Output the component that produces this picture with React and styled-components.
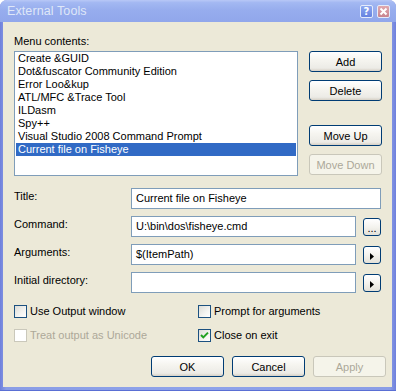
import React from 'react'
import styled, { createGlobalStyle } from 'styled-components'

const tools = [
    'Create &GUID',
    'Dot&fuscator Community Edition',
    'Error Loo&kup',
    'ATL/MFC &Trace Tool',
    'ILDasm',
    'Spy++',
    'Visual Studio 2008 Command Prompt',
    'Current file on Fisheye',
]

const GlobalStyle = createGlobalStyle`
html, body {
    margin:0;
    padding:0;
    background:#ffffff;
}
* {
    box-sizing:border-box;
}
`

const CheckBox = ({ label, checked, disabled }) => (
    <CheckRow disabled={disabled}>
        <Box disabled={disabled}>
            {checked && (
                <svg width="11" height="11" viewBox="0 0 11 11">
                    <path d="M2 5 L4.3 7.4 L9 2.6" fill="none" stroke="#21a121" strokeWidth="2" />
                </svg>
            )}
        </Box>
        <span>{label}</span>
    </CheckRow>
)

const Arrow = () => (
    <svg width="4" height="7" viewBox="0 0 4 7"><path d="M0 0 L4 3.5 L0 7 Z" fill="#000" /></svg>
)

const App = () => {
    return (
        <>
            <GlobalStyle />
            <Window>
                <TitleBar>
                    <TitleText>External Tools</TitleText>
                    <CaptionButtons>
                        <CaptionButton>?</CaptionButton>
                        <CaptionButton close>
                            <svg width="9" height="9" viewBox="0 0 9 9">
                                <path d="M1.5 1.5 L7.5 7.5 M7.5 1.5 L1.5 7.5" stroke="#ffffff" strokeWidth="2" />
                            </svg>
                        </CaptionButton>
                    </CaptionButtons>
                </TitleBar>
                <Client>
                    <Label>Menu contents:</Label>
                    <TopRow>
                        <ListBox>
                            {tools.map((t, i) => (
                                <ListItem key={t} selected={i === tools.length - 1}>{t}</ListItem>
                            ))}
                        </ListBox>
                        <SideButtons>
                            <Button>Add</Button>
                            <Button>Delete</Button>
                            <Spacer />
                            <Button>Move Up</Button>
                            <Button disabled>Move Down</Button>
                        </SideButtons>
                    </TopRow>
                    <Form>
                        <FieldLabel>Title:</FieldLabel>
                        <Input wide>Current file on Fisheye</Input>
                        <FieldLabel>Command:</FieldLabel>
                        <Input>U:\bin\dos\fisheye.cmd</Input>
                        <SmallButton>...</SmallButton>
                        <FieldLabel>Arguments:</FieldLabel>
                        <Input>$(ItemPath)</Input>
                        <SmallButton><Arrow /></SmallButton>
                        <FieldLabel>Initial directory:</FieldLabel>
                        <Input></Input>
                        <SmallButton><Arrow /></SmallButton>
                    </Form>
                    <Options>
                        <CheckBox label="Use Output window" />
                        <CheckBox label="Prompt for arguments" />
                        <CheckBox label="Treat output as Unicode" disabled />
                        <CheckBox label="Close on exit" checked />
                    </Options>
                    <Footer>
                        <Button>OK</Button>
                        <Button>Cancel</Button>
                        <Button disabled>Apply</Button>
                    </Footer>
                </Client>
            </Window>
        </>
    )
}

const Window = styled.div`
width:396px;
height:391px;
display:flex;
flex-direction:column;
background:linear-gradient(90deg, #6f80dc 0%, #8a9de6 1.5%, #8ea3ea 50%, #8a9de6 98.5%, #6f80dc 100%);
padding:0 4px 4px 3px;
border-radius:7px 7px 0 0;
font-family:"Liberation Sans", Arial, sans-serif;
font-size:11px;
color:#000000;
box-shadow:inset 0 -1px 0 #5a6fd4;
`

const TitleBar = styled.div`
height:22px;
margin:0 -4px 0 -3px;
padding:0 6px 0 7px;
display:flex;
align-items:center;
justify-content:space-between;
border-radius:7px 7px 0 0;
background:linear-gradient(180deg, #b8c8f6 0%, #a3b8f2 12%, #97adee 45%, #91a7eb 100%);
`

const TitleText = styled.div`
font-family:"Liberation Sans", Arial, sans-serif;
font-size:12.5px;
color:#dfe7f8;
letter-spacing:0.1px;
`

const CaptionButtons = styled.div`
display:flex;
gap:4px;
`

const CaptionButton = styled.div`
width:13px;
height:13px;
border-radius:2px;
border:1px solid #e4ebfb;
display:flex;
align-items:center;
justify-content:center;
color:#ffffff;
font-family:"DejaVu Sans", sans-serif;
font-weight:bold;
font-size:10px;
background:${p => p.close
        ? 'linear-gradient(180deg, #e0a8ae 0%, #c8848f 100%)'
        : 'linear-gradient(180deg, #8da8f0 0%, #6682e0 100%)'};
`

const Client = styled.div`
flex:1;
background:#ece9d8;
padding:13px 6px 0 11px;
display:flex;
flex-direction:column;
`

const Label = styled.div`
line-height:13px;
height:16px;
`

const TopRow = styled.div`
display:flex;
align-items:flex-start;
gap:11px;
`

const ListBox = styled.div`
width:284px;
height:125px;
background:#ffffff;
border:1px solid #7f9db9;
padding:0 1px;
`

const ListItem = styled.div`
height:13px;
line-height:13px;
padding-left:2px;
white-space:nowrap;
background:${p => p.selected ? '#316ac5' : 'transparent'};
color:${p => p.selected ? '#ffffff' : '#000000'};
`

const SideButtons = styled.div`
display:flex;
flex-direction:column;
gap:8px;
`

const Spacer = styled.div`
height:8px;
`

const Button = styled.div`
width:73px;
height:21px;
display:flex;
align-items:center;
justify-content:center;
border-radius:3px;
border:1px solid ${p => p.disabled ? '#c9c7ba' : '#003c74'};
color:${p => p.disabled ? '#aca899' : '#000000'};
background:${p => p.disabled
        ? '#f5f4ea'
        : 'linear-gradient(180deg, #ffffff 0%, #f6f5f0 40%, #ecebe6 85%, #d6d0c5 100%)'};
`

const Form = styled.div`
display:grid;
grid-template-columns:110px 225px 18px;
column-gap:7px;
row-gap:7px;
margin-top:12px;
align-items:center;
`

const FieldLabel = styled.div`
line-height:13px;
margin-top:-4px;
`

const Input = styled.div`
grid-column:${p => p.wide ? '2 / 4' : 'auto'};
height:21px;
line-height:19px;
background:#ffffff;
border:1px solid #7f9db9;
padding-left:4px;
white-space:nowrap;
overflow:hidden;
`

const SmallButton = styled.div`
width:18px;
height:18px;
display:flex;
align-items:center;
justify-content:center;
border-radius:3px;
border:1px solid #003c74;
background:linear-gradient(180deg, #ffffff 0%, #f4f3ee 50%, #e3e1d8 100%);
font-size:11px;
line-height:10px;
padding-top:3px;
`

const Options = styled.div`
display:grid;
grid-template-columns:184px 1fr;
grid-auto-rows:24px;
margin-top:12px;
`

const CheckRow = styled.div`
display:flex;
align-items:flex-start;
gap:3px;
color:${p => p.disabled ? '#aca899' : '#000000'};
line-height:13px;
`

const Box = styled.div`
width:13px;
height:13px;
flex:none;
display:flex;
align-items:center;
justify-content:center;
border:1px solid ${p => p.disabled ? '#cac8bb' : '#1c5180'};
background:${p => p.disabled ? '#ffffff' : 'linear-gradient(135deg, #dcdcd7 0%, #f4f4f1 60%, #ffffff 100%)'};
`

const Footer = styled.div`
display:flex;
justify-content:flex-end;
gap:8px;
margin-top:3px;
`

export default App
